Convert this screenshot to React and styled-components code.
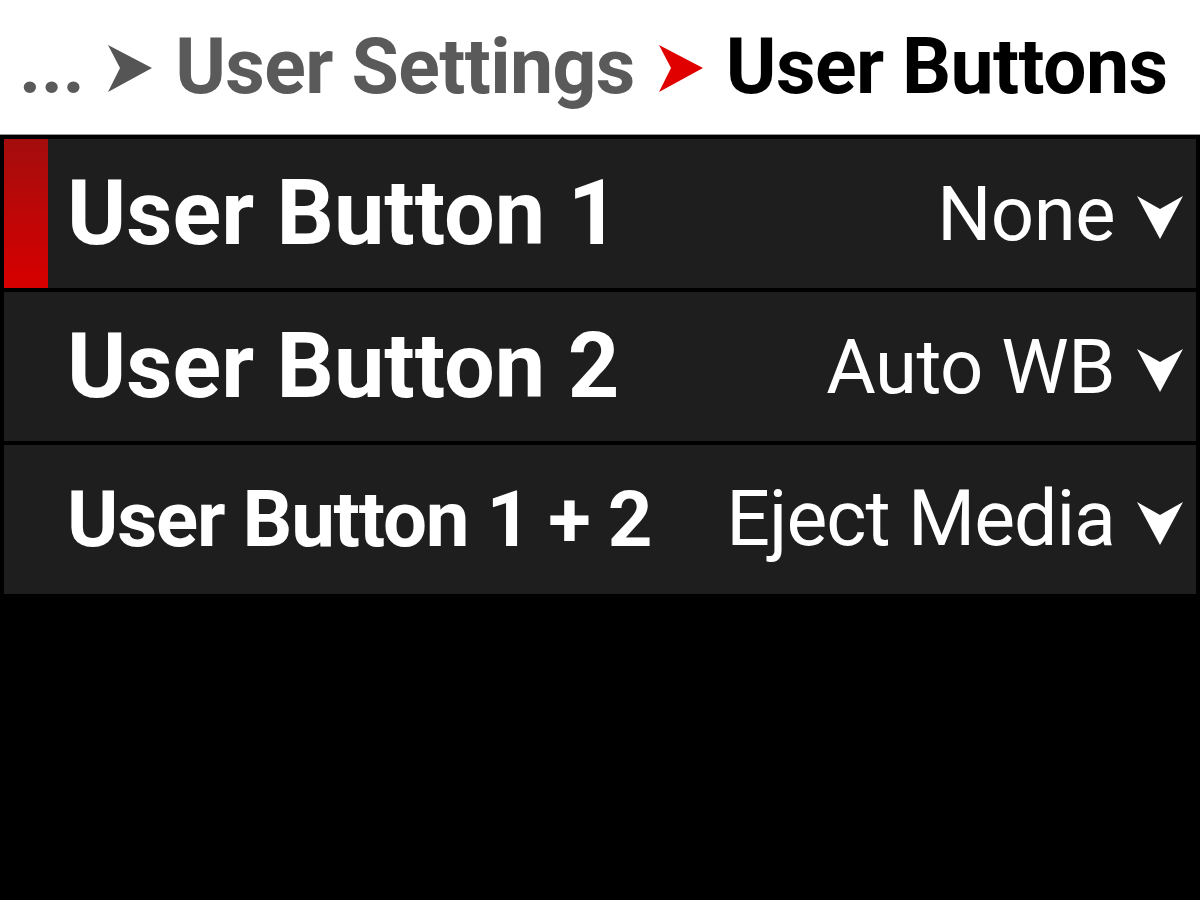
import React from "react";
import styled, { createGlobalStyle } from "styled-components";

const GlobalStyle = createGlobalStyle`
  html, body {
    margin: 0;
    padding: 0;
    background: #000;
  }
  body {
    font-family: Roboto, "Liberation Sans", sans-serif;
  }
`;

const rows = [
  { label: "User Button 1", value: "None", active: true },
  { label: "User Button 2", value: "Auto WB" },
  { label: "User Button 1 + 2", value: "Eject Media", small: true },
];

const Arrow = ({ color, dir }) =>
  dir === "down" ? (
    <svg width="48" height="44" viewBox="0 0 48 44">
      <polygon points="1,1 24,14 47,1 24,44" fill={color} />
    </svg>
  ) : (
    <svg width="44" height="48" viewBox="0 0 44 48">
      <polygon points="0,0 44,23 0,47 12,23" fill={color} />
    </svg>
  );

export default function App() {
  return (
    <Screen>
      <GlobalStyle />
      <Breadcrumb>
        <Crumb>...</Crumb>
        <Sep>
          <Arrow color="#555" />
        </Sep>
        <Crumb>User Settings</Crumb>
        <Sep>
          <Arrow color="#e00000" />
        </Sep>
        <Crumb current>User Buttons</Crumb>
      </Breadcrumb>
      <List>
        {rows.map((r) => (
          <Row key={r.label}>
            <Marker active={r.active} />
            <Label small={r.small}>{r.label}</Label>
            <Value small={r.small}>
              {r.value}
              <Arrow color="#fff" dir="down" />
            </Value>
          </Row>
        ))}
      </List>
    </Screen>
  );
}

const Screen = styled.div`
  width: 1200px;
  height: 900px;
  background: #000;
  overflow: hidden;
`;

const Breadcrumb = styled.div`
  height: 135px;
  background: #fff;
  display: flex;
  align-items: center;
  padding-left: 19px;
  box-sizing: border-box;
  border-bottom: 1px solid #9a9a9a;
`;

const Crumb = styled.span`
  font-size: 77px;
  font-weight: 700;
  color: ${(p) => (p.current ? "#000" : "#5a5a5a")};
  letter-spacing: -0.6px;
  line-height: 1;
`;

const Sep = styled.span`
  display: flex;
  align-items: center;
  margin: 4px 23px 0 24px;
`;

const List = styled.div`
  display: flex;
  flex-direction: column;
  gap: 4px;
  padding: 4px;
`;

const Row = styled.div`
  height: 149px;
  background: #1e1e1e;
  display: flex;
  align-items: center;
`;

const Marker = styled.div`
  align-self: stretch;
  width: 44px;
  margin-right: 19px;
  background: ${(p) =>
    p.active ? "linear-gradient(#a30d0d, #d80000)" : "transparent"};
`;

const Label = styled.div`
  flex: 1;
  color: #fff;
  font-weight: 700;
  font-size: ${(p) => (p.small ? "78px" : "90px")};
  letter-spacing: ${(p) => (p.small ? "-1.2px" : "0")};
  line-height: 1;
`;

const Value = styled.div`
  display: flex;
  align-items: center;
  gap: 21px;
  padding-right: 12px;
  color: #fff;
  font-weight: 400;
  font-size: ${(p) => (p.small ? "77px" : "76px")};
  letter-spacing: ${(p) => (p.small ? "-1px" : "-0.5px")};
  line-height: 1;
  svg {
    margin-top: 6px;
  }
`;
